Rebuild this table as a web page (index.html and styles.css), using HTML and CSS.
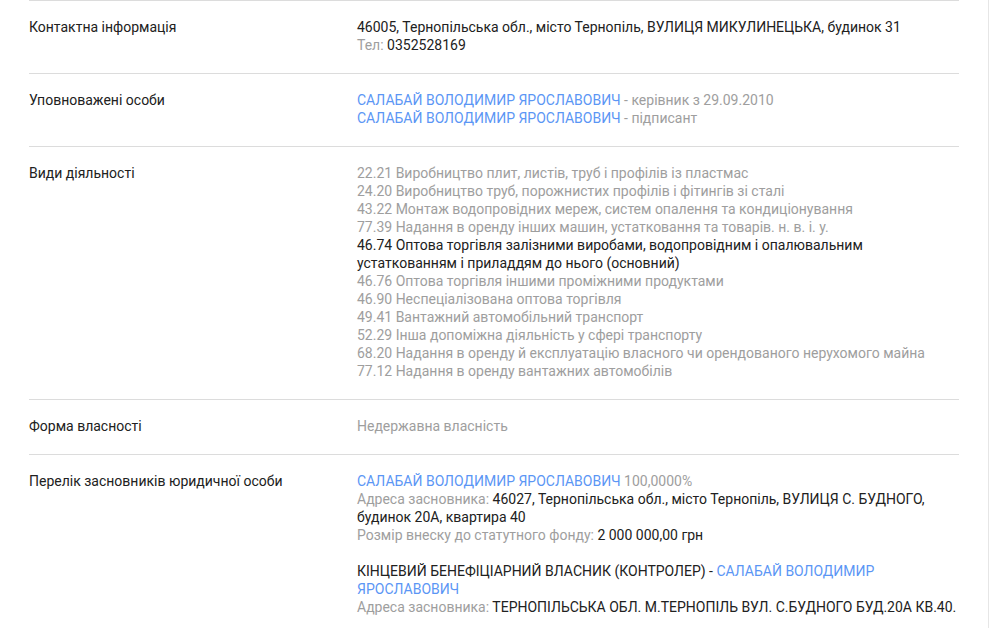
FILE: index.html
```html
<!DOCTYPE html>
<html lang="uk">
<head>
    <meta charset="UTF-8">
    <meta name="viewport" content="width=device-width, initial-scale=1.0">
    <title>Картка юридичної особи</title>
    <link rel="stylesheet" href="styles.css">
</head>
<body>
    <div class="page">
        <div class="info-table">
            <div class="info-row">
                <div class="info-label">Контактна інформація</div>
                <div class="info-value">
                    <div>46005, Тернопільська обл., місто Тернопіль, ВУЛИЦЯ МИКУЛИНЕЦЬКА, будинок 31</div>
                    <div><span class="muted">Тел:</span> 0352528169</div>
                </div>
            </div>
            <div class="info-row">
                <div class="info-label">Уповноважені особи</div>
                <div class="info-value">
                    <div><a class="link" href="#">САЛАБАЙ ВОЛОДИМИР ЯРОСЛАВОВИЧ</a> <span class="muted">- керівник з 29.09.2010</span></div>
                    <div><a class="link" href="#">САЛАБАЙ ВОЛОДИМИР ЯРОСЛАВОВИЧ</a> <span class="muted">- підписант</span></div>
                </div>
            </div>
            <div class="info-row">
                <div class="info-label">Види діяльності</div>
                <div class="info-value">
                    <div class="muted">22.21 Виробництво плит, листів, труб і профілів із пластмас</div>
                    <div class="muted">24.20 Виробництво труб, порожнистих профілів і фітингів зі сталі</div>
                    <div class="muted">43.22 Монтаж водопровідних мереж, систем опалення та кондиціонування</div>
                    <div class="muted">77.39 Надання в оренду інших машин, устатковання та товарів. н. в. і. у.</div>
                    <div>46.74 Оптова торгівля залізними виробами, водопровідним і опалювальним устаткованням і приладдям до нього (основний)</div>
                    <div class="muted">46.76 Оптова торгівля іншими проміжними продуктами</div>
                    <div class="muted">46.90 Неспеціалізована оптова торгівля</div>
                    <div class="muted">49.41 Вантажний автомобільний транспорт</div>
                    <div class="muted">52.29 Інша допоміжна діяльність у сфері транспорту</div>
                    <div class="muted">68.20 Надання в оренду й експлуатацію власного чи орендованого нерухомого майна</div>
                    <div class="muted">77.12 Надання в оренду вантажних автомобілів</div>
                </div>
            </div>
            <div class="info-row">
                <div class="info-label">Форма власності</div>
                <div class="info-value muted">Недержавна власність</div>
            </div>
            <div class="info-row">
                <div class="info-label">Перелік засновників юридичної особи</div>
                <div class="info-value">
                    <div class="founder">
                        <div><a class="link" href="#">САЛАБАЙ ВОЛОДИМИР ЯРОСЛАВОВИЧ</a> <span class="muted">100,0000%</span></div>
                        <div><span class="muted">Адреса засновника:</span> 46027, Тернопільська обл., місто Тернопіль, ВУЛИЦЯ С. БУДНОГО, будинок 20А, квартира 40</div>
                        <div><span class="muted">Розмір внеску до статутного фонду:</span> 2 000 000,00 грн</div>
                    </div>
                    <div class="founder">
                        <div>КІНЦЕВИЙ БЕНЕФІЦІАРНИЙ ВЛАСНИК (КОНТРОЛЕР) - <a class="link" href="#">САЛАБАЙ ВОЛОДИМИР ЯРОСЛАВОВИЧ</a></div>
                        <div><span class="muted">Адреса засновника:</span> ТЕРНОПІЛЬСЬКА ОБЛ. М.ТЕРНОПІЛЬ ВУЛ. С.БУДНОГО БУД.20А КВ.40.</div>
                    </div>
                </div>
            </div>
        </div>
    </div>
</body>
</html>
```

FILE: styles.css
```css
body {
    margin: 0;
    font-family: Roboto, "Liberation Sans", Arial, sans-serif;
    font-size: 14px;
    line-height: 18px;
    color: #212121;
    background-color: #fff;
}
.page {
    width: 989px;
    min-height: 628px;
    border-right: 1px solid #e6e6e6;
    padding-left: 29px;
    box-sizing: border-box;
}
.info-table {
    width: 930px;
}
.info-row {
    display: flex;
    border-top: 1px solid #dcdcdc;
    padding: 17px 0 19px;
}
.info-label {
    width: 328px;
    flex-shrink: 0;
}
.info-value {
    flex: 1;
    padding-right: 2px;
}
.muted {
    color: #9e9e9e;
}
.link {
    color: #5b96f5;
    text-decoration: none;
}
.founder + .founder {
    margin-top: 18px;
}
```
